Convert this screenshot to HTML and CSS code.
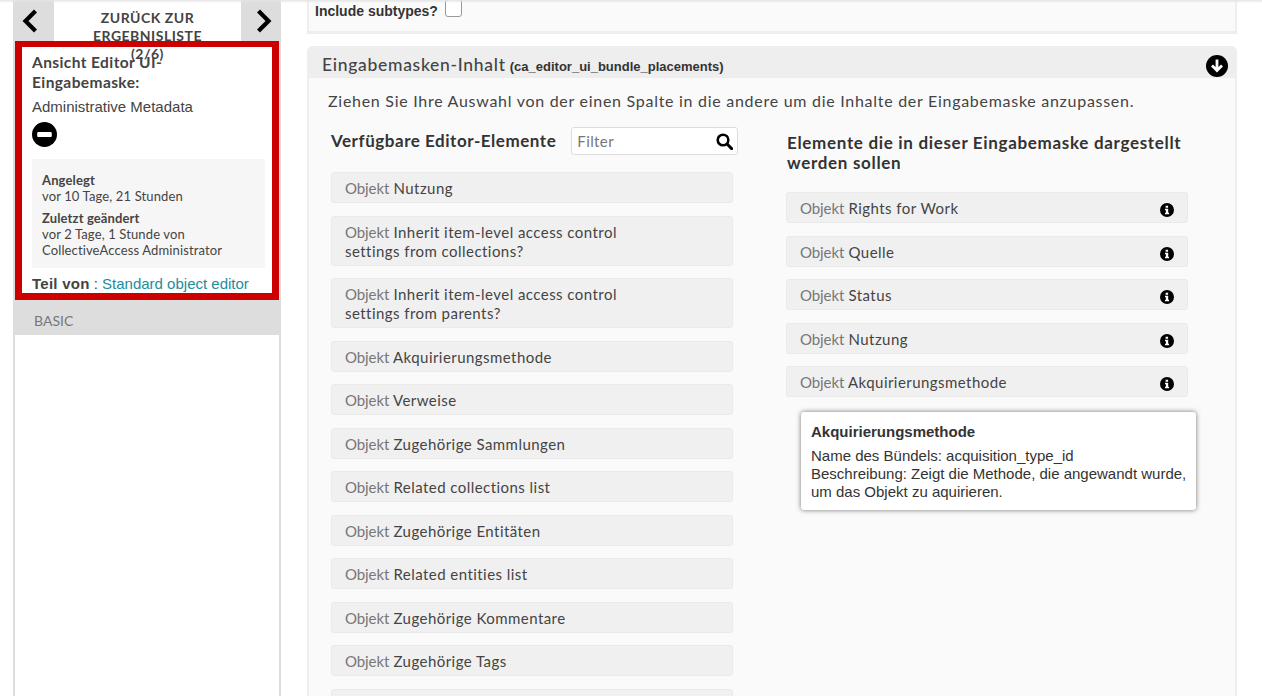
FILE: index.html
```html
<!DOCTYPE html>
<html lang="de">
<head>
<meta charset="utf-8">
<title>Ansicht Editor UI-Eingabemaske</title>
<link rel="stylesheet" href="styles.css">
</head>
<body>
<svg class="defs" width="0" height="0" aria-hidden="true">
  <symbol id="i-info" viewBox="0 0 14 14">
    <circle cx="7" cy="7" r="7" fill="#000"/>
    <path d="M5.6 2.8h2.5v1.9H5.6zM5 5.8h3.2v3.9h.9v1.5H5V9.7h.9V7.3H5z" fill="#fff"/>
  </symbol>
</svg>
<div class="page">
  <div class="topshade"></div>
  <aside class="sidebar">
    <nav class="nav">
      <a class="nav-btn nav-prev"><svg class="chev" viewBox="0 0 16 24"><path d="M13.5 2 3.5 12l10 10" fill="none" stroke="#000" stroke-width="4.2"/></svg></a>
      <div class="nav-title">ZURÜCK ZUR ERGEBNISLISTE (2/6)</div>
      <a class="nav-btn nav-next"><svg class="chev" viewBox="0 0 16 24"><path d="m2.5 2 10 10-10 10" fill="none" stroke="#000" stroke-width="4.2"/></svg></a>
    </nav>
    <section class="info">
      <h2 class="info-title">Ansicht Editor UI-Eingabemaske:</h2>
      <p class="info-name">Administrative Metadata</p>
      <svg class="minus" viewBox="0 0 24 24"><circle cx="12" cy="12" r="12" fill="#000"/><rect x="5" y="9.5" width="14" height="5" rx="1" fill="#fff"/></svg>
      <div class="meta">
        <b class="meta-label">Angelegt</b>
        <div class="meta-value">vor 10 Tage, 21 Stunden</div>
        <b class="meta-label second">Zuletzt geändert</b>
        <div class="meta-value">vor 2 Tage, 1 Stunde von<br>CollectiveAccess Administrator</div>
      </div>
      <p class="part"><b class="part-label">Teil von</b> : <a class="part-link">Standard object editor</a></p>
    </section>
    <div class="basic">BASIC</div>
    <div class="redbox"></div>
  </aside>
  <main class="main">
    <section class="panel-top">
      <label class="subtypes">Include subtypes?</label>
      <span class="checkbox"></span>
    </section>
    <section class="panel">
      <header class="panel-head">
        <span class="panel-name">Eingabemasken-Inhalt</span>
        <span class="panel-code">(ca_editor_ui_bundle_placements)</span>
        <svg class="down" viewBox="0 0 22 22"><circle cx="11" cy="11" r="11" fill="#000"/><path d="M11 4.5v11M6 10.5l5 5 5-5" fill="none" stroke="#fff" stroke-width="2.8"/></svg>
      </header>
      <div class="panel-body">
        <p class="intro">Ziehen Sie Ihre Auswahl von der einen Spalte in die andere um die Inhalte der Eingabemaske anzupassen.</p>
        <div class="cols">
          <div class="col col-left">
            <div class="col-head">
              <h3 class="col-title">Verfügbare Editor-Elemente</h3>
              <div class="filter">
                <span class="filter-text">Filter</span>
                <svg class="search" viewBox="0 0 16 16"><circle cx="6.6" cy="6.6" r="5" fill="none" stroke="#000" stroke-width="2.4"/><path d="m10.4 10.4 4.3 4.3" stroke="#000" stroke-width="2.8" stroke-linecap="round"/></svg>
              </div>
            </div>
            <ul class="list">
              <li class="item"><span class="obj">Objekt</span> Nutzung</li>
              <li class="item"><span class="obj">Objekt</span> Inherit item-level access control<br>settings from collections?</li>
              <li class="item"><span class="obj">Objekt</span> Inherit item-level access control<br>settings from parents?</li>
              <li class="item"><span class="obj">Objekt</span> Akquirierungsmethode</li>
              <li class="item"><span class="obj">Objekt</span> Verweise</li>
              <li class="item"><span class="obj">Objekt</span> Zugehörige Sammlungen</li>
              <li class="item"><span class="obj">Objekt</span> Related collections list</li>
              <li class="item"><span class="obj">Objekt</span> Zugehörige Entitäten</li>
              <li class="item"><span class="obj">Objekt</span> Related entities list</li>
              <li class="item"><span class="obj">Objekt</span> Zugehörige Kommentare</li>
              <li class="item"><span class="obj">Objekt</span> Zugehörige Tags</li>
              <li class="item">&nbsp;</li>
            </ul>
          </div>
          <div class="col col-right">
            <h3 class="col-title col-title-right">Elemente die in dieser Eingabemaske dargestellt werden sollen</h3>
            <ul class="list">
              <li class="item item-i"><span><span class="obj">Objekt</span> Rights for Work</span><svg class="info-ic"><use href="#i-info"/></svg></li>
              <li class="item item-i"><span><span class="obj">Objekt</span> Quelle</span><svg class="info-ic"><use href="#i-info"/></svg></li>
              <li class="item item-i"><span><span class="obj">Objekt</span> Status</span><svg class="info-ic"><use href="#i-info"/></svg></li>
              <li class="item item-i"><span><span class="obj">Objekt</span> Nutzung</span><svg class="info-ic"><use href="#i-info"/></svg></li>
              <li class="item item-i"><span><span class="obj">Objekt</span> Akquirierungsmethode</span><svg class="info-ic"><use href="#i-info"/></svg></li>
            </ul>
            <div class="tooltip">
              <b class="tip-title">Akquirierungsmethode</b>
              <div class="tip-text">Name des Bündels: acquisition_type_id<br>Beschreibung: Zeigt die Methode, die angewandt wurde, um das Objekt zu aquirieren.</div>
            </div>
          </div>
        </div>
      </div>
    </section>
  </main>
</div>
</body>
</html>
```
FILE: styles.css
```css
* { box-sizing: border-box; }
html, body { margin: 0; padding: 0; height: 100%; overflow: hidden; background: #fff; }
body { font-family: "Lato", "Liberation Sans", sans-serif; color: #333; }
.defs { position: absolute; }
h2, h3, p, ul { margin: 0; padding: 0; }
.page { position: relative; display: flex; align-items: flex-start; gap: 26px; height: 696px; padding-left: 13px; overflow: hidden; }
.topshade { position: absolute; z-index: 5; left: 0; right: 0; top: 0; height: 3px; background: linear-gradient(#e4e4e4, rgba(255,255,255,0)); }

.sidebar { position: relative; flex: none; width: 268px; height: 696px; border-left: 2px solid #ddd; border-right: 2px solid #ddd; }
.nav { display: flex; height: 41px; }
.nav-btn { flex: none; height: 41px; background: #ddd; display: flex; padding-top: 9px; }
.nav-prev { width: 39px; padding-left: 7px; justify-content: flex-start; }
.nav-next { width: 38px; padding-right: 7px; justify-content: flex-end; }
.chev { width: 16px; height: 24px; }
.nav-title { flex: 1; text-align: center; font-size: 14px; font-weight: 700; line-height: 18px; padding: 9px 30px 0; color: #444; letter-spacing: .5px; }
.info { height: 259px; padding: 11px 17px 0; }
.info-title { font-size: 15.5px; font-weight: 700; line-height: 20px; width: 150px; color: #444; letter-spacing: .4px; }
.info-name { font-family: "Liberation Sans", sans-serif; font-size: 15px; line-height: 18px; margin-top: 6px; color: #444; }
.minus { display: block; width: 25px; height: 25px; margin-top: 6px; }
.meta { width: 233px; height: 109px; background: #f6f6f6; margin-top: 12px; padding: 13px 10px 0; font-size: 13px; line-height: 16px; letter-spacing: .13px; }
.meta-label { display: block; font-weight: 700; color: #444; }
.meta-label.second { margin-top: 6px; }
.meta-value { color: #444; }
.part { font-family: "Liberation Sans", sans-serif; font-size: 15px; line-height: 18px; margin-top: 7px; white-space: nowrap; color: #444; }
.part-label { letter-spacing: .25px; }
.part-link { color: #1b8e9e; }
.basic { height: 35px; background: #ddd; color: #777; font-size: 14px; line-height: 42px; padding-left: 19px; }
.redbox { position: absolute; left: 0; top: 41px; width: 264px; height: 259px; border: solid #c00; border-width: 6px 7px 7px; }

.main { flex: none; width: 930px; }
.panel-top { position: relative; height: 34px; background: #fafafa; border: solid #eee; border-width: 0 2px 3px; }
.subtypes { position: absolute; left: 6px; top: 3px; font-family: "Liberation Sans", sans-serif; font-weight: 700; font-size: 14px; line-height: 16px; color: #333; }
.checkbox { position: absolute; left: 136px; top: -1px; width: 17px; height: 18px; background: #fff; border: 1px solid #999; border-radius: 3px; }
.panel { margin-top: 12px; background: #fafafa; border: solid #eee; border-width: 0 2px; border-radius: 6px 6px 0 0; height: 660px; }
.panel-head { position: relative; height: 32px; margin: 0 -2px; background: #eee; border-radius: 6px 6px 0 0; padding: 8px 0 0 15px; line-height: 22px; white-space: nowrap; }
.panel-name { font-size: 17.5px; font-weight: 500; color: #444; letter-spacing: .7px; }
.panel-code { font-family: "Liberation Sans", sans-serif; font-size: 13px; font-weight: 700; color: #333; }
.down { position: absolute; right: 9px; top: 9px; width: 22px; height: 22px; }
.panel-body { padding: 13px 0 0 19px; }
.intro { font-size: 16px; line-height: 20px; color: #444; letter-spacing: .72px; white-space: nowrap; }
.cols { display: flex; padding: 16px 0 0 3px; }
.col { position: relative; flex: none; width: 402px; }
.col-left { margin-right: 53px; }
.col-head { display: flex; align-items: center; gap: 15px; height: 28px; margin-bottom: 17px; }
.col-title { font-size: 17px; font-weight: 700; line-height: 20px; color: #333; letter-spacing: .54px; white-space: nowrap; }
.col-title-right { white-space: normal; padding: 6px 0 0 1px; margin-bottom: 19px; letter-spacing: .68px; }
.filter { flex: none; width: 167px; height: 28px; background: #fff; border: 1px solid #ddd; border-radius: 3px; display: flex; align-items: center; justify-content: space-between; padding: 0 4px 0 5px; margin-right: -5px; }
.filter-text { font-size: 15px; color: #777; letter-spacing: .4px; }
.search { width: 17px; height: 17px; }
.list { list-style: none; display: flex; flex-direction: column; gap: 12.5px; }
.item { min-height: 31px; background: #f0f0f0; border: 1px solid #eaeaea; border-radius: 3px; padding: 6px 13px 4px; font-size: 15px; line-height: 19px; color: #444; letter-spacing: .45px; }
.obj { color: #777; letter-spacing: -.1px; }
.item-i { display: flex; justify-content: space-between; align-items: flex-start; }
.info-ic { flex: none; width: 14px; height: 14px; margin: 4px 0 0 0; }
.tooltip { position: absolute; left: 15px; top: 285px; width: 395px; height: 98px; background: #fff; border-radius: 3px; box-shadow: 0 0 5px rgba(0,0,0,.55); padding: 11px 6px 11px 10px; font-family: "Liberation Sans", sans-serif; font-size: 15px; line-height: 18px; color: #333; z-index: 3; }
.tip-title { display: block; margin-bottom: 6px; }
```
